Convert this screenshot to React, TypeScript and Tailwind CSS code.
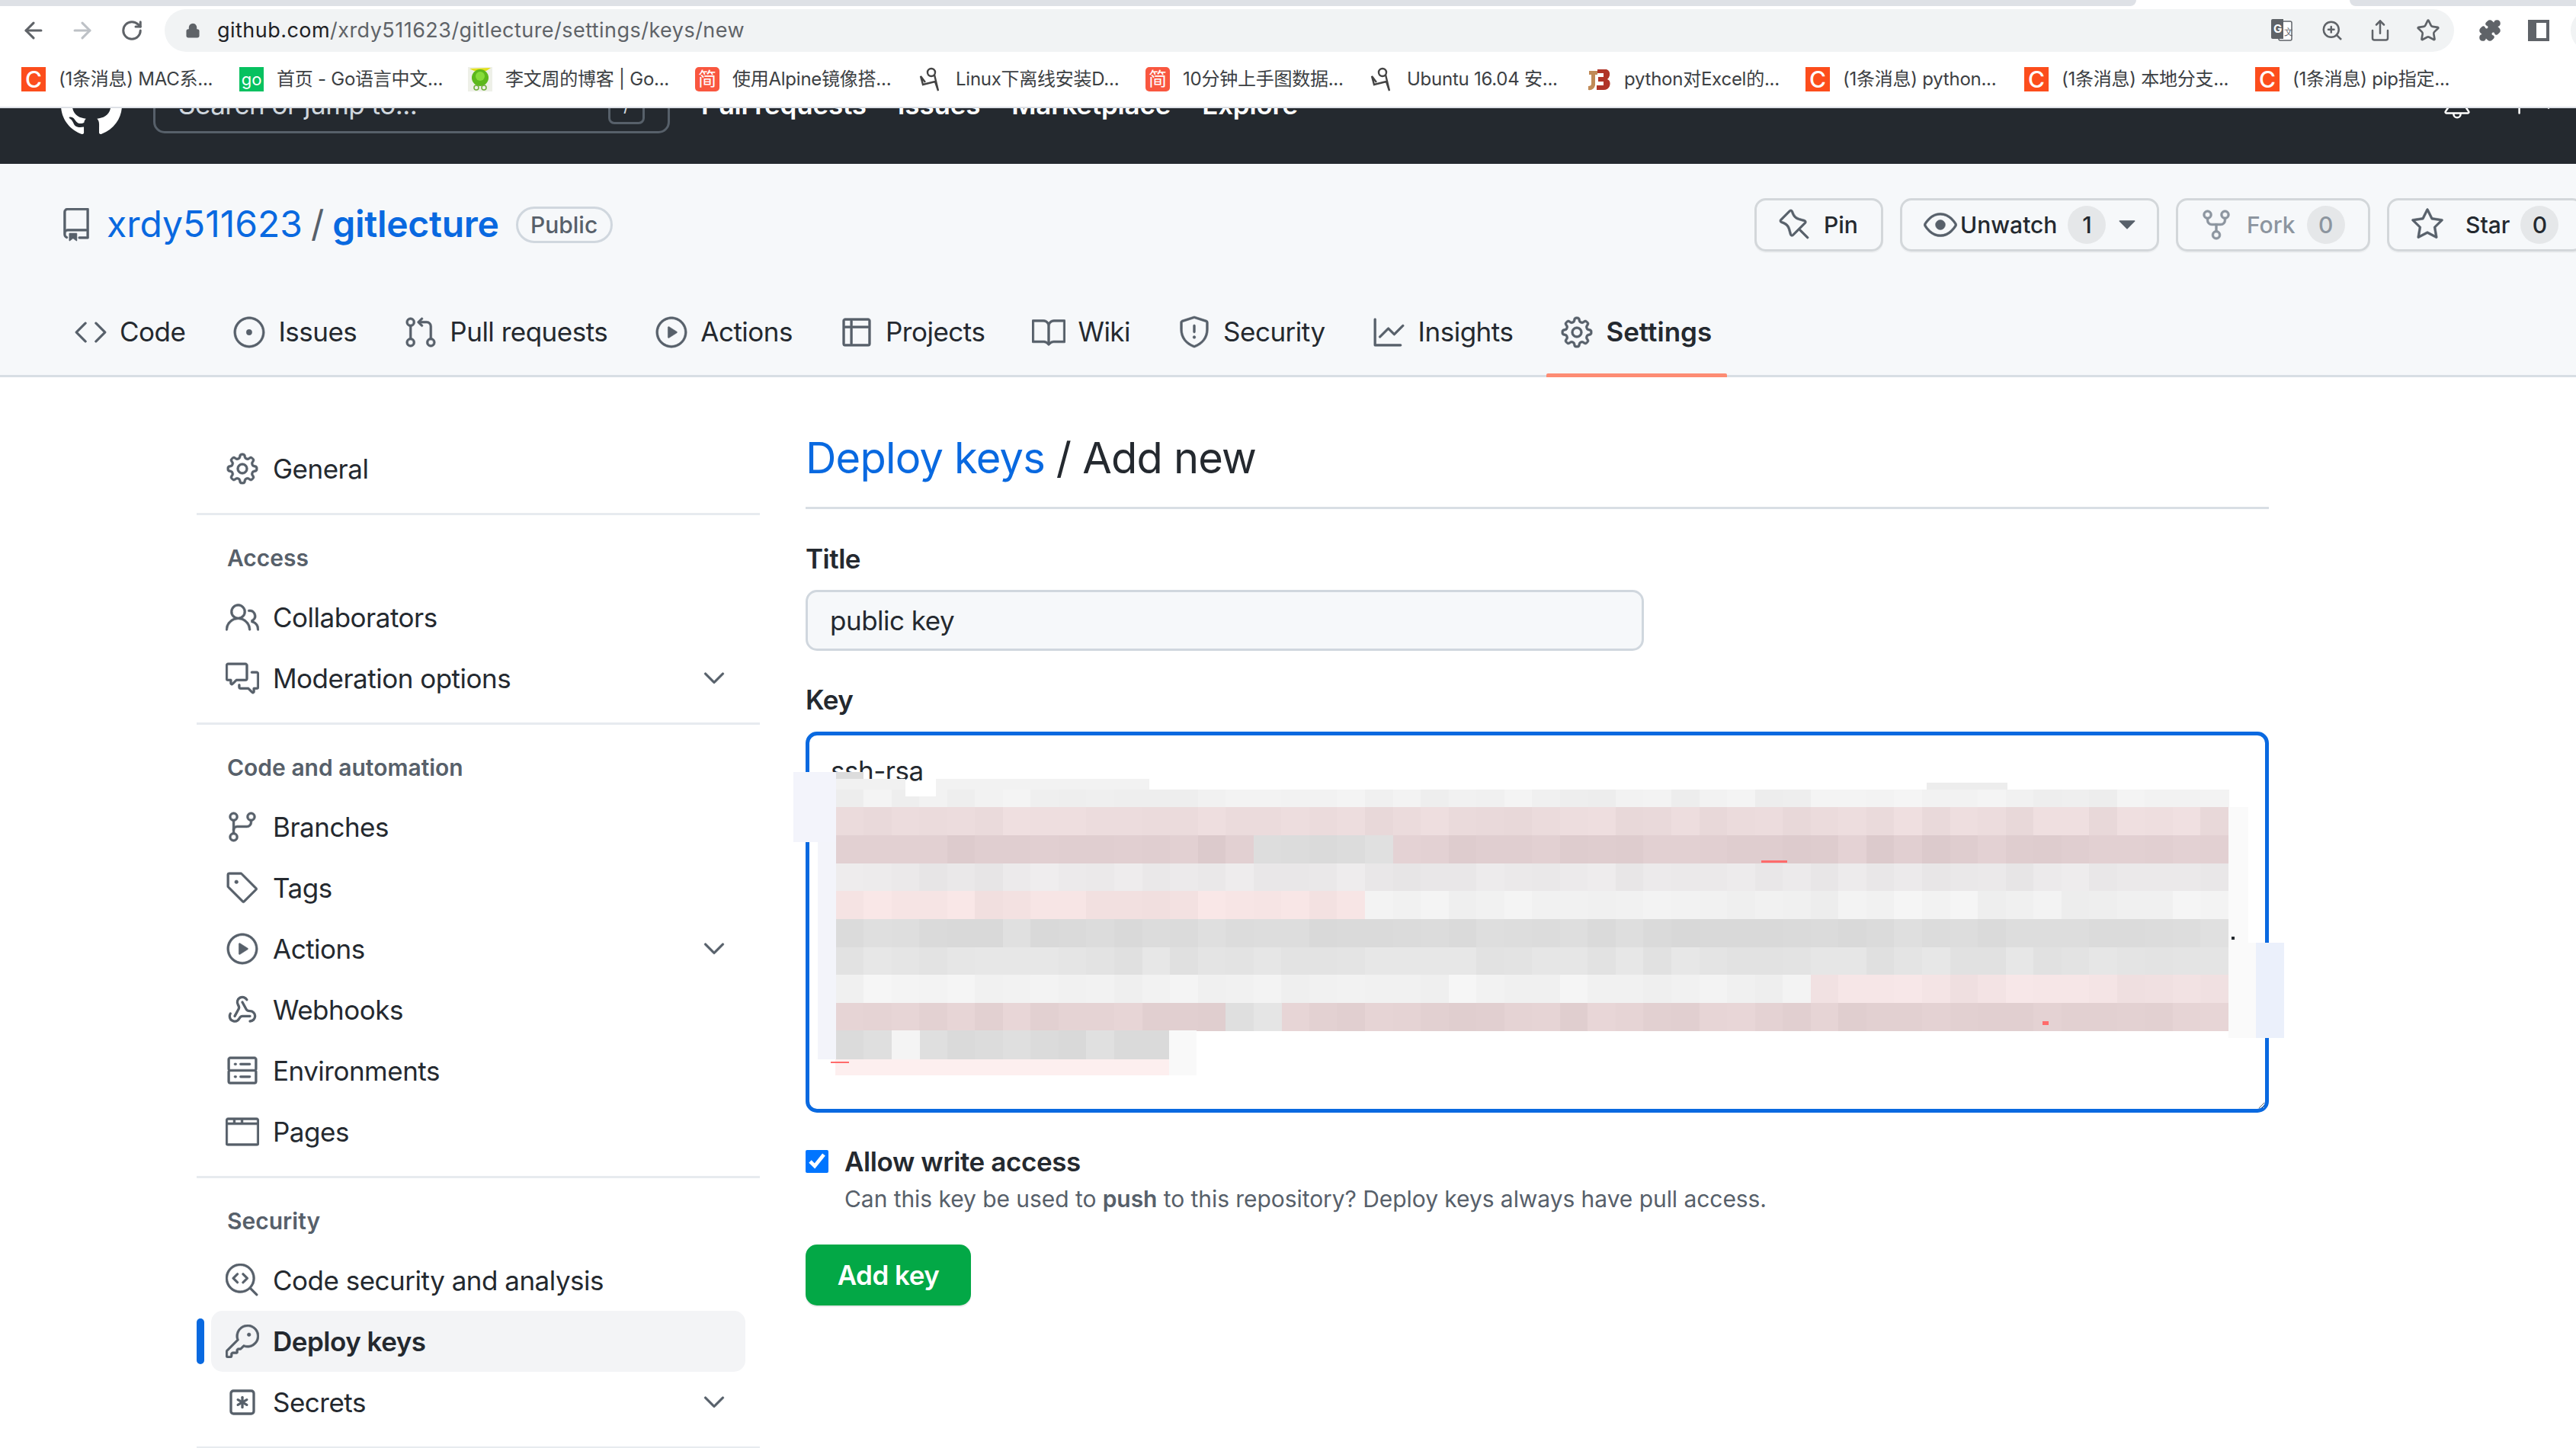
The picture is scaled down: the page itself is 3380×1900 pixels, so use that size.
import { ArrowLeft, ArrowRight, RotateCw, Lock, ZoomIn, Share, Star, Puzzle, Webhook, SquareAsterisk } from 'lucide-react';
import {
  GoRepo, GoCode, GoIssueOpened, GoGitPullRequest, GoPlay, GoTable, GoBook, GoShield, GoGraph, GoGear,
  GoPeople, GoCommentDiscussion, GoGitBranch, GoTag, GoServer, GoBrowser, GoCodescan, GoKey,
  GoChevronDown, GoPin, GoEye, GoRepoForked, GoStar, GoBell, GoPlus, GoTriangleDown,
} from 'react-icons/go';

const bookmarks = [
  { icon: 'c', label: '(1条消息) MAC系...', width: 'w-[204px]' },
  { icon: 'go', label: '首页 - Go语言中文...', width: 'w-[218px]' },
  { icon: 'frog', label: '李文周的博客 | Go...', width: 'w-[216px]' },
  { icon: 'jian', label: '使用Alpine镜像搭...', width: 'w-[211px]' },
  { icon: 'nine', label: 'Linux下离线安装D...', width: 'w-[216px]' },
  { icon: 'jian', label: '10分钟上手图数据...', width: 'w-[212px]' },
  { icon: 'nine', label: 'Ubuntu 16.04 安...', width: 'w-[203px]' },
  { icon: 'jb', label: 'python对Excel的...', width: 'w-[205px]' },
  { icon: 'c', label: '(1条消息) python...', width: 'w-[205px]' },
  { icon: 'c', label: '(1条消息) 本地分支...', width: 'w-[221px]' },
  { icon: 'c', label: '(1条消息) pip指定...', width: 'w-[207px]' },
];

const tabs = [
  { label: 'Code', icon: GoCode },
  { label: 'Issues', icon: GoIssueOpened },
  { label: 'Pull requests', icon: GoGitPullRequest },
  { label: 'Actions', icon: GoPlay },
  { label: 'Projects', icon: GoTable },
  { label: 'Wiki', icon: GoBook },
  { label: 'Security', icon: GoShield },
  { label: 'Insights', icon: GoGraph },
  { label: 'Settings', icon: GoGear, active: true },
];

function GithubMark({ className }: { className?: string }) {
  return (
    <svg className={className} width="80" height="80" viewBox="0 0 16 16" fill="currentColor">
      <path d="M8 0C3.58 0 0 3.58 0 8c0 3.54 2.29 6.53 5.47 7.59.4.07.55-.17.55-.38 0-.19-.01-.82-.01-1.49-2.01.37-2.53-.49-2.69-.94-.09-.23-.48-.94-.82-1.13-.28-.15-.68-.52-.01-.53.63-.01 1.08.58 1.23.82.72 1.21 1.87.87 2.33.66.07-.52.28-.87.51-1.07-1.78-.2-3.64-.89-3.64-3.95 0-.87.31-1.59.82-2.15-.08-.2-.36-1.02.08-2.12 0 0 .67-.21 2.2.82.64-.18 1.32-.27 2-.27.68 0 1.36.09 2 .27 1.53-1.04 2.2-.82 2.2-.82.44 1.1.16 1.92.08 2.12.51.56.82 1.27.82 2.15 0 3.07-1.87 3.75-3.65 3.95.29.25.54.73.54 1.48 0 1.07-.01 1.93-.01 2.2 0 .21.15.46.55.38A8.013 8.013 0 0016 8c0-4.42-3.58-8-8-8z" />
    </svg>
  );
}

function Favicon({ kind }: { kind: string }) {
  if (kind === 'c') {
    return <span className="flex h-[32px] w-[32px] items-center justify-center bg-[#fc4d1c] text-[30px] leading-none font-medium text-white">C</span>;
  }
  if (kind === 'jian') {
    return <span className="flex h-[32px] w-[32px] items-center justify-center rounded-[5px] bg-[#f9573f] text-[24px] leading-none text-white">简</span>;
  }
  if (kind === 'go') {
    return <span className="flex h-[32px] w-[32px] items-center justify-center bg-[#07c160] text-[22px] leading-none text-white">go</span>;
  }
  if (kind === 'frog') {
    return (
      <svg width="32" height="32" viewBox="0 0 32 32">
        <rect width="32" height="32" fill="#eef0e8" />
        <path d="M2 2 L30 1 L24 5 L8 5Z" fill="#e3e01a" />
        <ellipse cx="16" cy="14" rx="11" ry="11" fill="#5cb81c" />
        <ellipse cx="16" cy="12" rx="6" ry="6" fill="#86dc3a" />
        <circle cx="11" cy="27" r="3" fill="none" stroke="#6fae3a" strokeWidth="1.5" />
        <circle cx="21" cy="27" r="3" fill="none" stroke="#6fae3a" strokeWidth="1.5" />
      </svg>
    );
  }
  if (kind === 'nine') {
    return (
      <svg width="32" height="32" viewBox="0 0 32 32" fill="none" stroke="#444" strokeWidth="2.4">
        <circle cx="17" cy="7" r="5" />
        <path d="M21 10 L26 31 L22 19 L6 23 L3 12 L9 20" />
      </svg>
    );
  }
  return (
    <svg width="32" height="32" viewBox="0 0 32 32">
      <path d="M3 5 H14 V10 H11 V24 Q9 31 2 30 V25 Q6 25 6 22 V10 H3Z" fill="#c08a57" />
      <path d="M14 3 H26 Q31 5 30 11 Q29 15 27 16 Q32 18 30 25 Q28 30 22 30 H13 V24 H22 V19 H15 V13 H22 V8 H14Z" fill="#b03428" />
    </svg>
  );
}

function TranslateIcon() {
  return (
    <svg className="shrink-0" width="28" height="30" viewBox="0 0 28 30">
      <rect x="10" y="3" width="17" height="25" rx="2" fill="#fff" stroke="#5f6368" strokeWidth="1.5" />
      <path d="M0 2 Q0 0 2 0 H16 V26 H2 Q0 26 0 24Z" fill="#5f6368" />
      <text x="3" y="18" fontSize="15" fontWeight="700" fill="#fff">G</text>
      <text x="17" y="21" fontSize="12" fill="#5f6368">文</text>
    </svg>
  );
}

function BrowserChrome() {
  return (
    <div className="relative h-[142px] border-b-[2px] border-[#dee1e6] bg-white">
      <div className="flex h-[8px]">
        <div className="w-[2803px] rounded-br-[10px] bg-[#dee1e6]" />
        <div className="w-[280px]" />
        <div className="flex-1 rounded-bl-[10px] bg-[#dee1e6]" />
      </div>
      <div className="flex h-[60px] items-center pt-[4px]">
        <ArrowLeft className="ml-[27px] shrink-0 text-[#5f6368]" size={34} strokeWidth={2.2} />
        <ArrowRight className="ml-[30px] shrink-0 text-[#bdc1c6]" size={34} strokeWidth={2.2} />
        <RotateCw className="ml-[33px] shrink-0 text-[#5f6368]" size={30} strokeWidth={2.4} />
        <div className="ml-[28px] flex h-[56px] w-[3004px] shrink-0 items-center rounded-full bg-[#f1f3f4]">
          <Lock className="ml-[27px] text-[#5f6368]" size={20} fill="#5f6368" strokeWidth={2.5} />
          <div className="ml-[22px] flex-1 text-[27px] tracking-[0.46px] text-[#5f6368]">
            <span className="text-[#202124]">github.com</span>/xrdy511623/gitlecture/settings/keys/new
          </div>
          <TranslateIcon />
          <ZoomIn className="ml-[37px] shrink-0 text-[#5f6368]" size={30} strokeWidth={2} />
          <Share className="ml-[33px] shrink-0 text-[#5f6368]" size={30} strokeWidth={2} />
          <Star className="ml-[32px] mr-[18px] shrink-0 text-[#5f6368]" size={32} strokeWidth={2} />
        </div>
        <Puzzle className="ml-[32px] shrink-0 text-[#5f6368]" size={30} fill="#5f6368" />
        <div className="ml-[35px] flex h-[28px] w-[28px] shrink-0 justify-end border-[4px] border-[#5f6368] bg-[#5f6368]">
          <div className="w-[13px] bg-white" />
        </div>
        <div className="ml-[28px] h-[56px] w-[56px] shrink-0 rounded-full bg-[#f1f3f4]" />
      </div>
      <div className="mt-[20px] flex h-[32px] items-center gap-[33px] pl-[28px] font-['Inter','Noto_Sans_CJK_SC',sans-serif] text-[#3c4043]">
        {bookmarks.map((b, i) => (
          <div key={i} className="flex items-center gap-[17px]">
            <Favicon kind={b.icon} />
            <span className={`${b.width} overflow-hidden text-[24px] tracking-[-0.25px] whitespace-nowrap`}>{b.label}</span>
          </div>
        ))}
      </div>
    </div>
  );
}

function DarkHeader() {
  return (
    <div className="h-[73px] overflow-hidden bg-[#24292f]">
      {/* page is scrolled, so only the bottom of the bar shows */}
      <div className="mt-[-82px] flex h-[155px] items-center text-[35px] font-semibold tracking-[-0.2px] whitespace-nowrap text-white">
        <GithubMark className="ml-[80px] text-white" />
        <div className="ml-[41px] flex h-[75px] w-[678px] items-center justify-between rounded-[15px] border-[3px] border-[#57606a] pr-[30px] pl-[30px] font-normal tracking-[-0.5px] text-[#d0d7de]">
          <span>Search or jump to...</span>
          <span className="flex h-[50px] w-[48px] items-center justify-center rounded-[8px] border-[3px] border-[#57606a] text-[24px]">/</span>
        </div>
        <div className="ml-[41px] flex gap-[41px]">
          <span>Pull requests</span>
          <span>Issues</span>
          <span>Marketplace</span>
          <span>Explore</span>
        </div>
        <GoBell className="ml-auto text-white" size={40} />
        <GoPlus className="ml-[42px] text-white" size={40} />
        <GoTriangleDown className="mr-[18px] text-white" size={36} />
      </div>
    </div>
  );
}

function HeaderButton({ children, className }: { children: React.ReactNode; className: string }) {
  return (
    <div className={`flex h-[70px] items-center rounded-[15px] border-[3px] border-[#d3d7da] bg-[#f6f8fa] text-[30px] font-medium shadow-[0_2px_0_rgba(27,31,36,0.04)] ${className}`}>
      {children}
    </div>
  );
}

function Counter({ value, muted }: { value: string; muted?: boolean }) {
  return (
    <span className={`flex h-[50px] w-[50px] items-center justify-center rounded-full bg-[#e5e7e9] text-[30px] font-medium ${muted ? 'text-[#8c959f]' : 'text-[#24292f]'}`}>
      {value}
    </span>
  );
}

function RepoHeader() {
  return (
    <div className="h-[280px] border-b-[3px] border-[#d8dee4] bg-[#f6f8fa] pt-[45px]">
      <div className="flex h-[70px] items-center whitespace-nowrap">
        <GoRepo className="-my-[2px] mr-[-2px] ml-[78px] stroke-[0.3px] text-[#57606a]" size={44} />
        <a className="mb-[2px] ml-[20px] text-[48px] text-[#0969e0]">xrdy511623</a>
        <span className="mx-[11px] mb-[2px] text-[48px] text-[#57606a]">/</span>
        <a className="mb-[2px] text-[48px] font-semibold tracking-[-0.3px] text-[#0969e0]">gitlecture</a>
        <span className="ml-[22px] flex h-[48px] w-[127px] items-center justify-center rounded-full border-[3px] border-[#d0d7de] text-[30px] font-medium text-[#57606a]">Public</span>
        <div className="mr-[-10px] ml-auto flex gap-[22px]">
          <HeaderButton className="w-[169px] gap-[18px] pl-[30px] text-[#24292f]">
            <GoPin className="-m-[2px] stroke-[0.3px] text-[#57606a]" size={44} />
            Pin
          </HeaderButton>
          <HeaderButton className="w-[340px] pl-[30px] text-[#24292f]">
            <GoEye className="-m-[2px] stroke-[0.3px] text-[#57606a]" size={44} />
            <span className="ml-[6px]">Unwatch</span>
            <span className="ml-[14px]"><Counter value="1" /></span>
            <GoTriangleDown className="ml-[8px] text-[#57606a]" size={40} />
          </HeaderButton>
          <HeaderButton className="w-[255px] pl-[30px] text-[#8c959f]">
            <GoRepoForked className="-m-[2px] stroke-[0.3px] text-[#8c959f]" size={44} />
            <span className="ml-[20px]">Fork</span>
            <span className="ml-[15px]"><Counter value="0" muted /></span>
          </HeaderButton>
          <HeaderButton className="w-[258px] pl-[30px] text-[#24292f]">
            <GoStar className="-m-[2px] stroke-[0.3px] text-[#57606a]" size={44} />
            <span className="ml-[30px]">Star</span>
            <span className="ml-[14px]"><Counter value="0" /></span>
          </HeaderButton>
        </div>
      </div>
      <nav className="mt-[49px] flex h-[113px] items-center gap-[24px] pl-[79px]">
        {tabs.map((t) => (
          <div key={t.label} className="relative flex h-full items-center gap-[18px] px-[20px]">
            <t.icon className="-m-[2px] stroke-[0.3px] text-[#57606a]" size={44} />
            <span className={`text-[35px] text-[#24292f] ${t.active ? 'font-semibold' : 'tracking-[-0.5px]'}`}>{t.label}</span>
            {t.active && <div className="absolute right-0 bottom-[-3px] left-0 h-[5px] rounded-t-[2px] bg-[#fd8c73]" />}
          </div>
        ))}
      </nav>
    </div>
  );
}

function SideItem({ icon: Icon, label, chevron, active, thin }: { icon: React.ComponentType<{ className?: string; size?: number; strokeWidth?: number }>; label: string; chevron?: boolean; active?: boolean; thin?: boolean }) {
  return (
    <div className="relative">
      {active && <div className="absolute top-[10px] left-0 h-[60px] w-[10px] rounded-full bg-[#0969e0]" />}
      <div className={`mx-[19px] flex h-[80px] items-center rounded-[15px] pr-[21px] pl-[21px] ${active ? 'bg-[#f3f4f6] font-semibold' : ''}`}>
        {thin ? (
          <Icon className="text-[#57606a]" size={40} strokeWidth={2} />
        ) : (
          <Icon className="-m-[2px] stroke-[0.3px] text-[#57606a]" size={44} />
        )}
        <span className="ml-[20px] flex-1 text-[35px] tracking-[-0.5px] text-[#24292f]">{label}</span>
        {chevron && <GoChevronDown className="-m-[2px] stroke-[0.3px] text-[#57606a]" size={44} />}
      </div>
    </div>
  );
}

function SideHeading({ children }: { children: React.ReactNode }) {
  return <div className="pt-[38px] pb-[19px] pl-[40px] text-[30px] leading-[37px] font-semibold text-[#57606a]">{children}</div>;
}

function Divider() {
  return <div className="mt-[18px] h-[3px] bg-[#e7ebef]" />;
}

function Sidebar() {
  return (
    <aside className="w-[739px] shrink-0 pt-[80px]">
      <SideItem icon={GoGear} label="General" />
      <Divider />
      <SideHeading>Access</SideHeading>
      <SideItem icon={GoPeople} label="Collaborators" />
      <SideItem icon={GoCommentDiscussion} label="Moderation options" chevron />
      <Divider />
      <SideHeading>Code and automation</SideHeading>
      <SideItem icon={GoGitBranch} label="Branches" />
      <SideItem icon={GoTag} label="Tags" />
      <SideItem icon={GoPlay} label="Actions" chevron />
      <SideItem icon={Webhook} label="Webhooks" thin />
      <SideItem icon={GoServer} label="Environments" />
      <SideItem icon={GoBrowser} label="Pages" />
      <Divider />
      <SideHeading>Security</SideHeading>
      <SideItem icon={GoCodescan} label="Code security and analysis" />
      <SideItem icon={GoKey} label="Deploy keys" active />
      <SideItem icon={SquareAsterisk} label="Secrets" chevron thin />
      <Divider />
    </aside>
  );
}

// pixelated redaction over the key: one row per text line, colours read off the picture
const mosaicRows: { y: number; h: number; color: number[]; from?: number; to?: number }[] = [
  { y: 1036, h: 23, color: [241, 241, 241] },
  { y: 1059, h: 37, color: [236, 220, 221] },
  { y: 1096, h: 37, color: [224, 206, 208] },
  { y: 1096, h: 37, color: [221, 221, 221], from: 15, to: 20 },
  { y: 1133, h: 36, color: [235, 233, 234] },
  { y: 1169, h: 37, color: [241, 241, 241] },
  { y: 1169, h: 37, color: [245, 227, 227], from: 0, to: 19 },
  { y: 1206, h: 37, color: [220, 220, 220] },
  { y: 1243, h: 36, color: [228, 228, 228] },
  { y: 1279, h: 37, color: [242, 242, 242] },
  { y: 1279, h: 37, color: [243, 227, 228], from: 35, to: 50 },
  { y: 1316, h: 37, color: [228, 210, 211] },
  { y: 1316, h: 37, color: [226, 226, 226], from: 14, to: 16 },
  { y: 1352, h: 38, color: [220, 220, 220], from: 0, to: 12 },
];

function noise(row: number, col: number) {
  const n = Math.sin(row * 127.1 + col * 311.7) * 43758.5453;
  return Math.round((n - Math.floor(n)) * 8 - 4);
}

function KeyMosaic() {
  const cellW = 36.55;
  const startX = 1096.5;
  return (
    <svg className="absolute top-[50px] left-[-17px]" width="1960" height="410" viewBox="1040 1010 1960 410" shapeRendering="crispEdges">
      <rect x="1041" y="1013" width="56" height="92" fill="#f3f4fb" />
      <rect x="1073" y="1105" width="24" height="285" fill="#f3f4fa" />
      <rect x="1097" y="1013" width="36" height="9" fill="#dcdcdc" />
      <rect x="1097" y="1022" width="91" height="14" fill="#f1f1f1" />
      <rect x="1228" y="1022" width="280" height="14" fill="#f2f2f2" />
      <rect x="2528" y="1027" width="106" height="9" fill="#ededed" />
      {mosaicRows.map((r, i) => {
        const from = r.from ?? 0;
        const to = r.to ?? 50;
        return Array.from({ length: to - from }, (_, k) => {
          const col = from + k;
          const d = noise(i, col);
          return (
            <rect
              key={`${i}-${col}`}
              x={startX + col * cellW}
              y={r.y}
              width={cellW + 0.5}
              height={r.h}
              fill={`rgb(${r.color[0] + d},${r.color[1] + d},${r.color[2] + d})`}
            />
          );
        });
      })}
      <rect x="1188" y="1036" width="40" height="9" fill="#fff" />
      <rect x="1170" y="1352" width="37" height="38" fill="#f4f4f4" />
      <rect x="1534" y="1352" width="36" height="59" fill="#f9f9f9" />
      <rect x="1096" y="1390" width="438" height="21" fill="#fdefef" />
      <rect x="2924" y="1059" width="26" height="178" fill="#fafafa" />
      <rect x="2924" y="1237" width="36" height="125" fill="#fafafa" />
      <rect x="2960" y="1237" width="37" height="125" fill="#ebf0fb" />
      <rect x="2311" y="1129" width="34" height="3" fill="#ff6b6b" />
      <rect x="2680" y="1340" width="8" height="5" fill="#ff6b6b" />
      <rect x="1090" y="1393" width="24" height="2" fill="#ff6b6b" />
      <rect x="2928" y="1229" width="4" height="4" fill="#24292f" />
    </svg>
  );
}

function DeployKeyForm() {
  return (
    <main className="ml-[60px] w-[1920px] pt-[69px]">
      <h2 className="h-[104px] border-b-[3px] border-[#d8dee4] text-[56px] leading-[75px] font-normal tracking-[-0.8px] text-[#24292f]">
        <a className="text-[#0969e0]">Deploy keys</a> / Add new
      </h2>
      <label className="mt-[43px] block text-[35px] leading-[44px] font-semibold tracking-[-0.5px] text-[#24292f]">Title</label>
      <input
        readOnly
        defaultValue="public key"
        className="mt-[19px] block h-[80px] w-[1100px] rounded-[15px] border-[3px] border-[#d0d7de] bg-[#f6f8fa] px-[29px] text-[35px] tracking-[-0.5px] text-[#24292f] outline-none"
      />
      <label className="mt-[42px] block text-[35px] leading-[44px] font-semibold tracking-[-0.5px] text-[#24292f]">Key</label>
      <div className="relative mt-[20px] h-[500px] w-[1920px]">
        <textarea
          readOnly
          defaultValue="ssh-rsa"
          className="block h-[500px] w-[1920px] resize-y rounded-[15px] border-[5px] border-[#0969e0] bg-white px-[28px] pt-[20px] text-[35px] leading-[52px] tracking-[-0.5px] text-[#24292f] outline-none"
        />
        <KeyMosaic />
      </div>
      <div className="mt-[47px] flex h-[34px] items-center">
        <input type="checkbox" readOnly defaultChecked className="m-0 h-[30px] w-[30px] accent-[#0075ff]" />
        <span className="ml-[21px] text-[35px] font-semibold tracking-[-0.4px] text-[#24292f]">Allow write access</span>
      </div>
      <p className="mt-[10px] ml-[51px] text-[30px] leading-[45px] tracking-[-0.06px] text-[#57606a]">
        Can this key be used to <strong className="font-semibold">push</strong> to this repository? Deploy keys always have pull access.
      </p>
      <button className="mt-[37px] flex h-[80px] w-[217px] items-center justify-center rounded-[15px] bg-[#03a846] text-[35px] font-semibold tracking-[-0.5px] text-white shadow-[0_2px_1px_rgba(27,31,36,0.1)]">
        Add key
      </button>
    </main>
  );
}

export default function App() {
  return (
    <div className="h-[1900px] w-[3380px] overflow-hidden bg-white font-['Inter',sans-serif] text-[#24292f]">
      <BrowserChrome />
      <DarkHeader />
      <RepoHeader />
      <div className="flex pl-[258px]">
        <Sidebar />
        <DeployKeyForm />
      </div>
    </div>
  );
}
